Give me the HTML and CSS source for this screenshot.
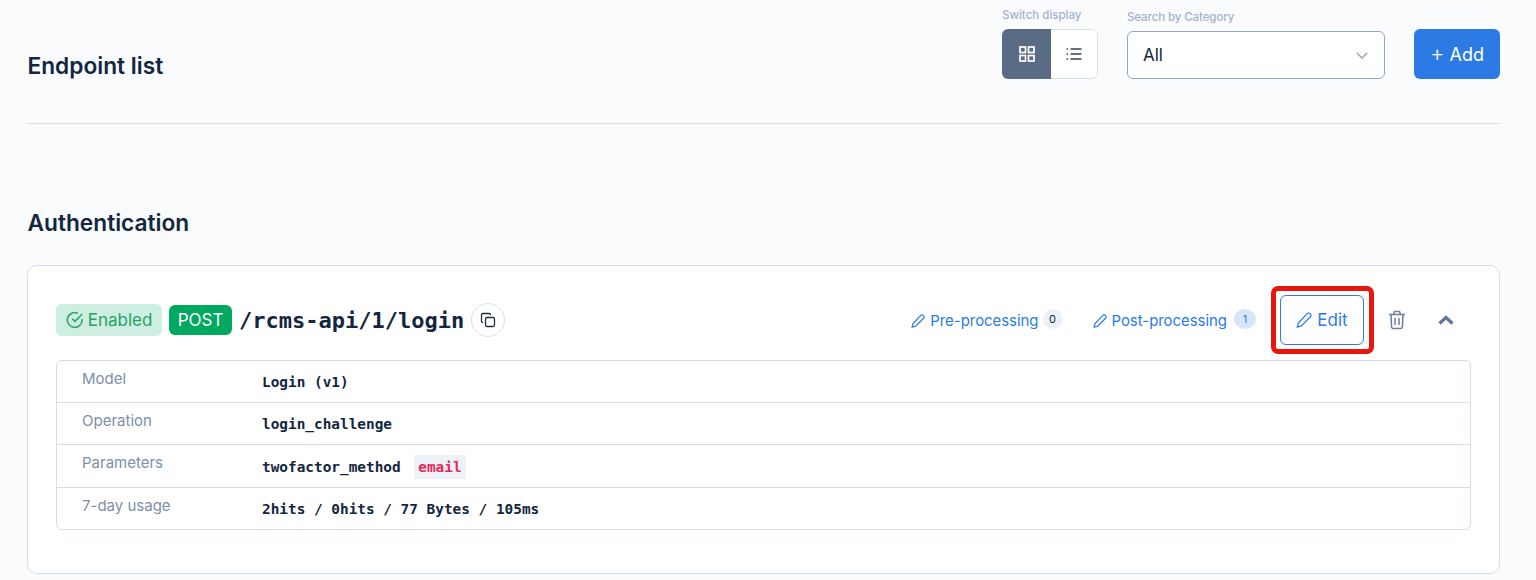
FILE: index.html
```html
<!DOCTYPE html>
<html lang="en">
<head>
  <meta charset="UTF-8" />
  <title>Endpoint list</title>
  <link rel="stylesheet" href="styles.css">
</head>
<body>
  <div class="page">
    <header class="page-head">
      <h1>Endpoint list</h1>
      <div class="head-tools">
        <div class="tool tool-switch">
          <span class="tool-label">Switch display</span>
          <div class="switch">
            <button class="switch-btn active">
              <svg width="16" height="16" viewBox="0 0 16 16" fill="none" stroke="#fff" stroke-width="1.7"><rect x="1" y="1" width="5.5" height="5.5"/><rect x="9.5" y="1" width="5.5" height="5.5"/><rect x="1" y="9.5" width="5.5" height="5.5"/><rect x="9.5" y="9.5" width="5.5" height="5.5"/></svg>
            </button>
            <button class="switch-btn">
              <svg width="16" height="16" viewBox="0 0 16 16" fill="none" stroke="#33445c" stroke-width="1.5"><path d="M4.5 3h11M4.5 8h11M4.5 13h11"/><path d="M.5 3h1.5M.5 8h1.5M.5 13h1.5"/></svg>
            </button>
          </div>
        </div>
        <div class="tool tool-category">
          <span class="tool-label">Search by Category</span>
          <div class="select">
            <span>All</span>
            <svg width="12" height="7" viewBox="0 0 12 7" fill="none" stroke="#8ba2c0" stroke-width="1.3"><path d="M.7.7 6 6l5.3-5.3"/></svg>
          </div>
        </div>
        <button class="add-btn"><span class="plus">+</span> Add</button>
      </div>
    </header>

    <h2 class="group-title">Authentication</h2>

    <section class="card">
      <div class="card-top">
        <div class="endpoint">
          <span class="badge badge-enabled">
            <svg width="18" height="18" viewBox="0 0 17 17" fill="none" stroke="#22a565" stroke-width="1.4"><path d="M15.3 7.6v.9a7 7 0 1 1-4.1-6.4"/><path d="M15.3 2.9 8.5 9.8 6 7.3"/></svg>
            Enabled
          </span>
          <span class="badge badge-post">POST</span>
          <code class="path">/rcms-api/1/login</code>
          <button class="copy-btn">
            <svg width="16" height="16" viewBox="0 0 16 16" fill="none" stroke="#1c2b3f" stroke-width="1.3"><rect x="5.5" y="5.5" width="9" height="9" rx="1.5"/><path d="M10.5 3V2.8a1.3 1.3 0 0 0-1.3-1.3H2.8a1.3 1.3 0 0 0-1.3 1.3v6.4a1.3 1.3 0 0 0 1.3 1.3H3"/></svg>
          </button>
        </div>
        <div class="actions">
          <a class="link link-pre">
            <svg class="pen" width="14" height="14" viewBox="0 0 16 16" fill="none" stroke="currentColor" stroke-width="1.4"><path d="M11.2 1.6a1.9 1.9 0 0 1 2.7 0l.5.5a1.9 1.9 0 0 1 0 2.7L5.3 14l-4 1 1-4z"/></svg>
            Pre-processing
            <span class="count">0</span>
          </a>
          <a class="link link-post">
            <svg class="pen" width="14" height="14" viewBox="0 0 16 16" fill="none" stroke="currentColor" stroke-width="1.4"><path d="M11.2 1.6a1.9 1.9 0 0 1 2.7 0l.5.5a1.9 1.9 0 0 1 0 2.7L5.3 14l-4 1 1-4z"/></svg>
            Post-processing
            <span class="count count-on">1</span>
          </a>
          <div class="highlight">
            <button class="edit-btn">
              <svg class="pen" width="16" height="16" viewBox="0 0 16 16" fill="none" stroke="currentColor" stroke-width="1.3"><path d="M11.2 1.6a1.9 1.9 0 0 1 2.7 0l.5.5a1.9 1.9 0 0 1 0 2.7L5.3 14l-4 1 1-4z"/></svg>
              Edit
            </button>
          </div>
          <button class="icon-btn trash">
            <svg width="18" height="20" viewBox="0 0 18 20" fill="none" stroke="#6b7f99" stroke-width="1.5"><path d="M1 4.5h16M6 4.5V2.6c0-.6.5-1.1 1.1-1.1h3.8c.6 0 1.1.5 1.1 1.1v1.9M3 4.5l.6 12.6c0 .8.7 1.4 1.5 1.4h7.8c.8 0 1.5-.6 1.5-1.4L15 4.5M7 8v7M11 8v7"/></svg>
          </button>
          <button class="icon-btn chevron">
            <svg width="16" height="10" viewBox="0 0 16 10" fill="none" stroke="#64799a" stroke-width="3.4"><path d="M1.5 8.5 8 2.5l6.5 6"/></svg>
          </button>
        </div>
      </div>

      <div class="info-table">
        <div class="info-row">
          <span class="info-name">Model</span>
          <code class="info-value">Login (v1)</code>
        </div>
        <div class="info-row">
          <span class="info-name">Operation</span>
          <code class="info-value">login_challenge</code>
        </div>
        <div class="info-row info-row-tall">
          <span class="info-name">Parameters</span>
          <code class="info-value">twofactor_method <span class="param">email</span></code>
        </div>
        <div class="info-row">
          <span class="info-name">7-day usage</span>
          <code class="info-value">2hits / 0hits / 77 Bytes / 105ms</code>
        </div>
      </div>
    </section>
  </div>
</body>
</html>
```

FILE: styles.css
```css
* {
  box-sizing: border-box;
}
body {
  margin: 0;
  height: 580px;
  overflow: hidden;
  background: #f9fbfd;
  color: #12263f;
  font-family: 'Inter', sans-serif;
}
.page {
  margin: 0 36px 0 27px;
}
.page-head {
  display: flex;
  justify-content: space-between;
  align-items: flex-end;
  height: 124px;
  padding-bottom: 44px;
  border-bottom: 1px solid #d3deea;
}
h1 {
  margin: 0 0 -2px 0.5px;
  font-size: 22.7px;
  font-weight: 600;
  line-height: 30px;
}
.head-tools {
  display: flex;
  align-items: flex-end;
}
.tool {
  display: flex;
  flex-direction: column;
}
.tool-label {
  font-size: 11.5px;
  line-height: 16px;
  color: #a2b2cc;
  font-weight: 500;
}
.tool-switch .tool-label {
  margin-bottom: 6px;
}
.tool-category {
  margin-left: 29px;
}
.tool-category .tool-label {
  margin-bottom: 6px;
  letter-spacing: -0.1px;
}
.switch {
  display: flex;
  width: 96px;
  height: 50px;
  border-radius: 6px;
  overflow: hidden;
  background: #fff;
}
.switch-btn {
  flex: 1;
  padding: 0;
  border: 1px solid #d5e0ef;
  border-left: none;
  border-radius: 0 6px 6px 0;
  background: #fff;
  display: flex;
  align-items: center;
  justify-content: center;
}
.switch-btn.active {
  background: #5a6b84;
  flex: 0 0 49px;
  border: none;
  border-radius: 0;
}
.select {
  display: flex;
  align-items: center;
  justify-content: space-between;
  width: 258px;
  height: 48px;
  padding: 0 16px 0 15px;
  border: 1px solid #90a6c4;
  border-radius: 6px;
  background: #fff;
  font-size: 17px;
}
.add-btn {
  width: 86px;
  height: 50px;
  margin-left: 29px;
  padding: 0;
  border: none;
  border-radius: 6px;
  background: #2c7be5;
  color: #fff;
  font-family: inherit;
  font-size: 18px;
  font-weight: 400;
}
.plus {
  font-size: 22px;
  font-weight: 300;
  line-height: 18px;
}
.group-title {
  margin: 84px 0 27px 0.5px;
  font-size: 22.7px;
  font-weight: 600;
  line-height: 30px;
}
.card {
  height: 309px;
  padding: 29px 28px;
  background: #fff;
  border: 1px solid #d3deea;
  border-radius: 10px;
}
.card-top {
  display: flex;
  justify-content: space-between;
  align-items: center;
  height: 50px;
  margin-bottom: 15px;
}
.endpoint {
  display: flex;
  align-items: center;
}
.badge {
  display: inline-flex;
  align-items: center;
  justify-content: center;
  border-radius: 6px;
  font-size: 17px;
}
.badge-enabled {
  gap: 4px;
  width: 106px;
  height: 32px;
  background: #cdeee0;
  color: #22a565;
}
.badge-post {
  width: 63px;
  height: 30px;
  margin-left: 7px;
  background: #00a860;
  color: #fff;
}
.path {
  margin-left: 7px;
  font-family: 'DejaVu Sans Mono', monospace;
  font-size: 22px;
  font-weight: 700;
}
.copy-btn {
  width: 34px;
  height: 34px;
  margin-left: 7px;
  padding: 0;
  border: 1px solid #d5e0ef;
  border-radius: 50%;
  background: #fff;
  display: flex;
  align-items: center;
  justify-content: center;
}
.actions {
  display: flex;
  align-items: center;
  color: #2c7be5;
}
.link {
  display: flex;
  align-items: center;
  padding-top: 1px;
  font-size: 14.9px;
}
.pen {
  margin-right: 5px;
}
.link-post {
  margin-left: 30px;
}
.count {
  display: inline-flex;
  align-items: center;
  justify-content: center;
  width: 20px;
  height: 20px;
  margin-left: 4px;
  margin-top: -3px;
  border-radius: 50%;
  background: #edf2f9;
  color: #12263f;
  font-size: 11px;
}
.count-on {
  width: 22px;
  margin-left: 7px;
  background: #d5e5fa;
  color: #2c7be5;
}
.highlight {
  width: 103px;
  height: 68px;
  margin-left: 15px;
  padding: 4px;
  border: 5px solid #e8170d;
  border-radius: 7px;
  flex-shrink: 0;
}
.edit-btn {
  display: flex;
  align-items: center;
  justify-content: center;
  width: 84px;
  height: 50px;
  padding: 0;
  border: 1px solid #2c7be5;
  border-radius: 6px;
  background: #fff;
  color: #2c7be5;
  font-family: inherit;
  font-size: 17px;
}
.icon-btn {
  display: flex;
  align-items: center;
  justify-content: center;
  padding: 0;
  border: none;
  background: none;
}
.trash {
  margin-left: 14px;
}
.chevron {
  margin-left: 32px;
  margin-right: 17px;
}
.info-table {
  border: 1px solid #d3deea;
  border-radius: 6px;
}
.info-row {
  display: flex;
  height: 42px;
  padding-left: 25px;
  border-bottom: 1px solid #d3deea;
}
.info-row-tall {
  height: 43px;
}
.info-row:last-child {
  height: 41px;
  border-bottom: none;
}
.info-name {
  width: 180px;
  padding-top: 8px;
  font-size: 15px;
  line-height: 20px;
  color: #7d8fa9;
}
.info-value {
  display: flex;
  align-items: center;
  height: 100%;
  padding-top: 1px;
  font-family: 'DejaVu Sans Mono', monospace;
  font-size: 14.4px;
  font-weight: 700;
  white-space: pre;
}
.param {
  margin-left: 5px;
  padding: 4px;
  background: #edf2f9;
  color: #e6285a;
}
```
